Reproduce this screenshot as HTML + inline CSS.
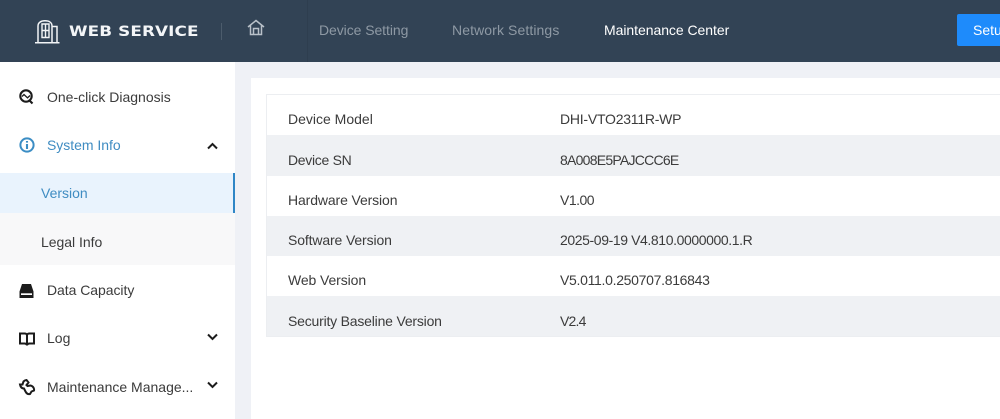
<!DOCTYPE html>
<html><head><meta charset="utf-8">
<style>
html,body{margin:0;padding:0;width:1000px;height:419px;overflow:hidden;background:#eff1f6}
body{position:relative;font-family:"Liberation Sans",sans-serif;font-size:14px;color:#3b3b3b}
.a{position:absolute}
.t{position:absolute;white-space:nowrap;line-height:20px;height:20px}
svg{position:absolute;overflow:visible}
</style></head><body>
<div class="a" style="left:0;top:0;width:1000px;height:62px;background:#324355"></div>
<svg style="left:35px;top:20px" width="25" height="24" viewBox="0 0 25 24" fill="none" stroke="#f2f4f6" stroke-width="1.500">
<path d="M0 22.800H24.500M3 22.500V6C3 2.500 6 .8 10 .8S17 2.500 17 6V22.500M17 6.500H22V22.500"/>
<path d="M7 4H14V17.500H7ZM10.500 4V17.500M7 10.500H14" stroke-width="1.400"/>
</svg>
<div class="t" style="left:69px;top:22px;color:#f3f5f7;font-weight:bold;font-size:14px;font-family:'DejaVu Sans',sans-serif;transform-origin:0 50%;transform:scaleX(1.2);letter-spacing:.1px">WEB SERVICE</div>
<div class="a" style="left:221px;top:23px;width:1px;height:17px;background:#4c5c6c"></div>
<svg style="left:247px;top:19px" width="18" height="17" viewBox="0 0 18 17" fill="none" stroke="#b9c1c9" stroke-width="1.500">
<path d="M1 8L9 1.500L17 8M3.500 6.500V15.500H14.500V6.500M6.500 15.500V9.500H11.500V15.500"/>
</svg>
<div class="a" style="left:307px;top:0;width:1px;height:62px;background:#2e3e4f"></div>
<div class="t" style="left:319px;top:20px;color:#8e99a4;letter-spacing:-.07px">Device Setting</div>
<div class="t" style="left:452px;top:20px;color:#8e99a4;letter-spacing:.1px">Network Settings</div>
<div class="t" style="left:604px;top:20px;color:#fff;letter-spacing:-.05px">Maintenance Center</div>
<div class="a" style="left:957px;top:14px;width:60px;height:32px;background:#1e8bfb;border-radius:2px"></div>
<div class="t" style="left:973px;top:20px;color:#fff">Setup</div>

<div class="a" style="left:0;top:62px;width:235px;height:357px;background:#fff"></div>
<div class="a" style="left:0;top:173px;width:235px;height:92px;background:#f8f8f9"></div>
<div class="a" style="left:0;top:173px;width:235px;height:40px;background:#e9f3fd"></div>
<div class="a" style="left:233px;top:173px;width:2px;height:40px;background:#2f86c6"></div>

<svg style="left:19px;top:89px" width="16" height="16" viewBox="0 0 16 16" fill="none" stroke="#1c1c1c" stroke-width="2.100">
<circle cx="7" cy="7" r="5.700"/><path d="M10.500 11.500L13.500 14.500" /><path d="M3 7.500L5 5.500L8.500 8.800L11 6.500" stroke-width="1.300"/>
</svg>
<div class="t" style="left:47px;top:87px">One-click Diagnosis</div>

<svg style="left:19px;top:137px" width="16" height="16" viewBox="0 0 16 16" fill="none" stroke="#3b8dc4" stroke-width="2">
<circle cx="8" cy="8" r="6.600"/><path d="M8 7V12M8 4V5.600" stroke-width="2.100"/>
</svg>
<div class="t" style="left:47px;top:135px;color:#3f8cc2;letter-spacing:-.03px">System Info</div>
<svg style="left:207px;top:142px" width="11" height="8" viewBox="0 0 11 8" fill="none" stroke="#1c1c1c" stroke-width="2"><path d="M1 6.500L5.500 2L10 6.500"/></svg>

<div class="t" style="left:41px;top:183px;color:#3f8cc2">Version</div>
<div class="t" style="left:41px;top:232px;letter-spacing:-.03px">Legal Info</div>

<svg style="left:19px;top:284px" width="15" height="14" viewBox="0 0 15 14"><path d="M3 0H12L14.500 7.500V14H.5V7.500Z" fill="#1c1c1c"/><rect x="2" y="9.300" width="11" height="1.700" fill="#fff"/></svg>
<div class="t" style="left:47px;top:280px;letter-spacing:-.05px">Data Capacity</div>

<svg style="left:19px;top:332px" width="16" height="14" viewBox="0 0 16 14" fill="none" stroke="#1c1c1c" stroke-width="2"><path d="M1 1.500H6C7.200 1.500 8 2.300 8 3.500V13C7.500 12 6.500 11.500 5.500 11.500H1ZM15 1.500H10C8.800 1.500 8 2.300 8 3.500V13C8.500 12 9.500 11.500 10.500 11.500H15Z"/></svg>
<div class="t" style="left:47px;top:328px">Log</div>
<svg style="left:207px;top:333px" width="11" height="8" viewBox="0 0 11 8" fill="none" stroke="#1c1c1c" stroke-width="2"><path d="M1 1.500L5.500 6L10 1.500"/></svg>

<svg style="left:19px;top:379px" width="16" height="16" viewBox="0 0 16 16" fill="none" stroke="#1c1c1c" stroke-width="2"><path d="M7.500 1L9.500 3.500L7.500 6L8.500 7L11.500 6.500C14 7 15.500 9.500 15 11.500L12.500 12.500L11 15C9 15.500 7.500 14.500 6.500 12.500L5 9.500C3 9.500 1.500 8 1 5.500L3.500 5.500L4.500 2.500C5.500 1.500 6.500 1 7.500 1Z"/></svg>
<div class="t" style="left:47px;top:377px;letter-spacing:0">Maintenance Manage...</div>
<svg style="left:207px;top:381px" width="11" height="8" viewBox="0 0 11 8" fill="none" stroke="#1c1c1c" stroke-width="2"><path d="M1 1.500L5.500 6L10 1.500"/></svg>

<div class="a" style="left:251px;top:78px;width:749px;height:341px;background:#fff"></div>
<div class="a" style="left:266px;top:94px;width:734px;height:243px;border-top:1px solid #eceef1;border-left:1px solid #eceef1;border-bottom:1px solid #eceef1;box-sizing:border-box"></div>
<div class="a" style="left:267px;top:135px;width:733px;height:41px;background:#eff1f4"></div>
<div class="a" style="left:267px;top:216px;width:733px;height:40px;background:#eff1f4"></div>
<div class="a" style="left:267px;top:296px;width:733px;height:40px;background:#eff1f4"></div>

<div class="t" style="left:288px;top:109px">Device Model</div><div class="t" style="left:560px;top:109px;letter-spacing:-.23px">DHI-VTO2311R-WP</div>
<div class="t" style="left:288px;top:150px;letter-spacing:-.3px">Device SN</div><div class="t" style="left:560px;top:150px;letter-spacing:-.75px">8A008E5PAJCCC6E</div>
<div class="t" style="left:288px;top:190px;letter-spacing:-.12px">Hardware Version</div><div class="t" style="left:560px;top:190px;letter-spacing:-.5px">V1.00</div>
<div class="t" style="left:288px;top:230px;letter-spacing:-.13px">Software Version</div><div class="t" style="left:560px;top:230px;letter-spacing:-.4px">2025-09-19 V4.810.0000000.1.R</div>
<div class="t" style="left:288px;top:270px;letter-spacing:-.1px">Web Version</div><div class="t" style="left:560px;top:270px;letter-spacing:-.3px">V5.011.0.250707.816843</div>
<div class="t" style="left:288px;top:311px;letter-spacing:-.2px">Security Baseline Version</div><div class="t" style="left:560px;top:311px;letter-spacing:-.8px">V2.4</div>
</body></html>
